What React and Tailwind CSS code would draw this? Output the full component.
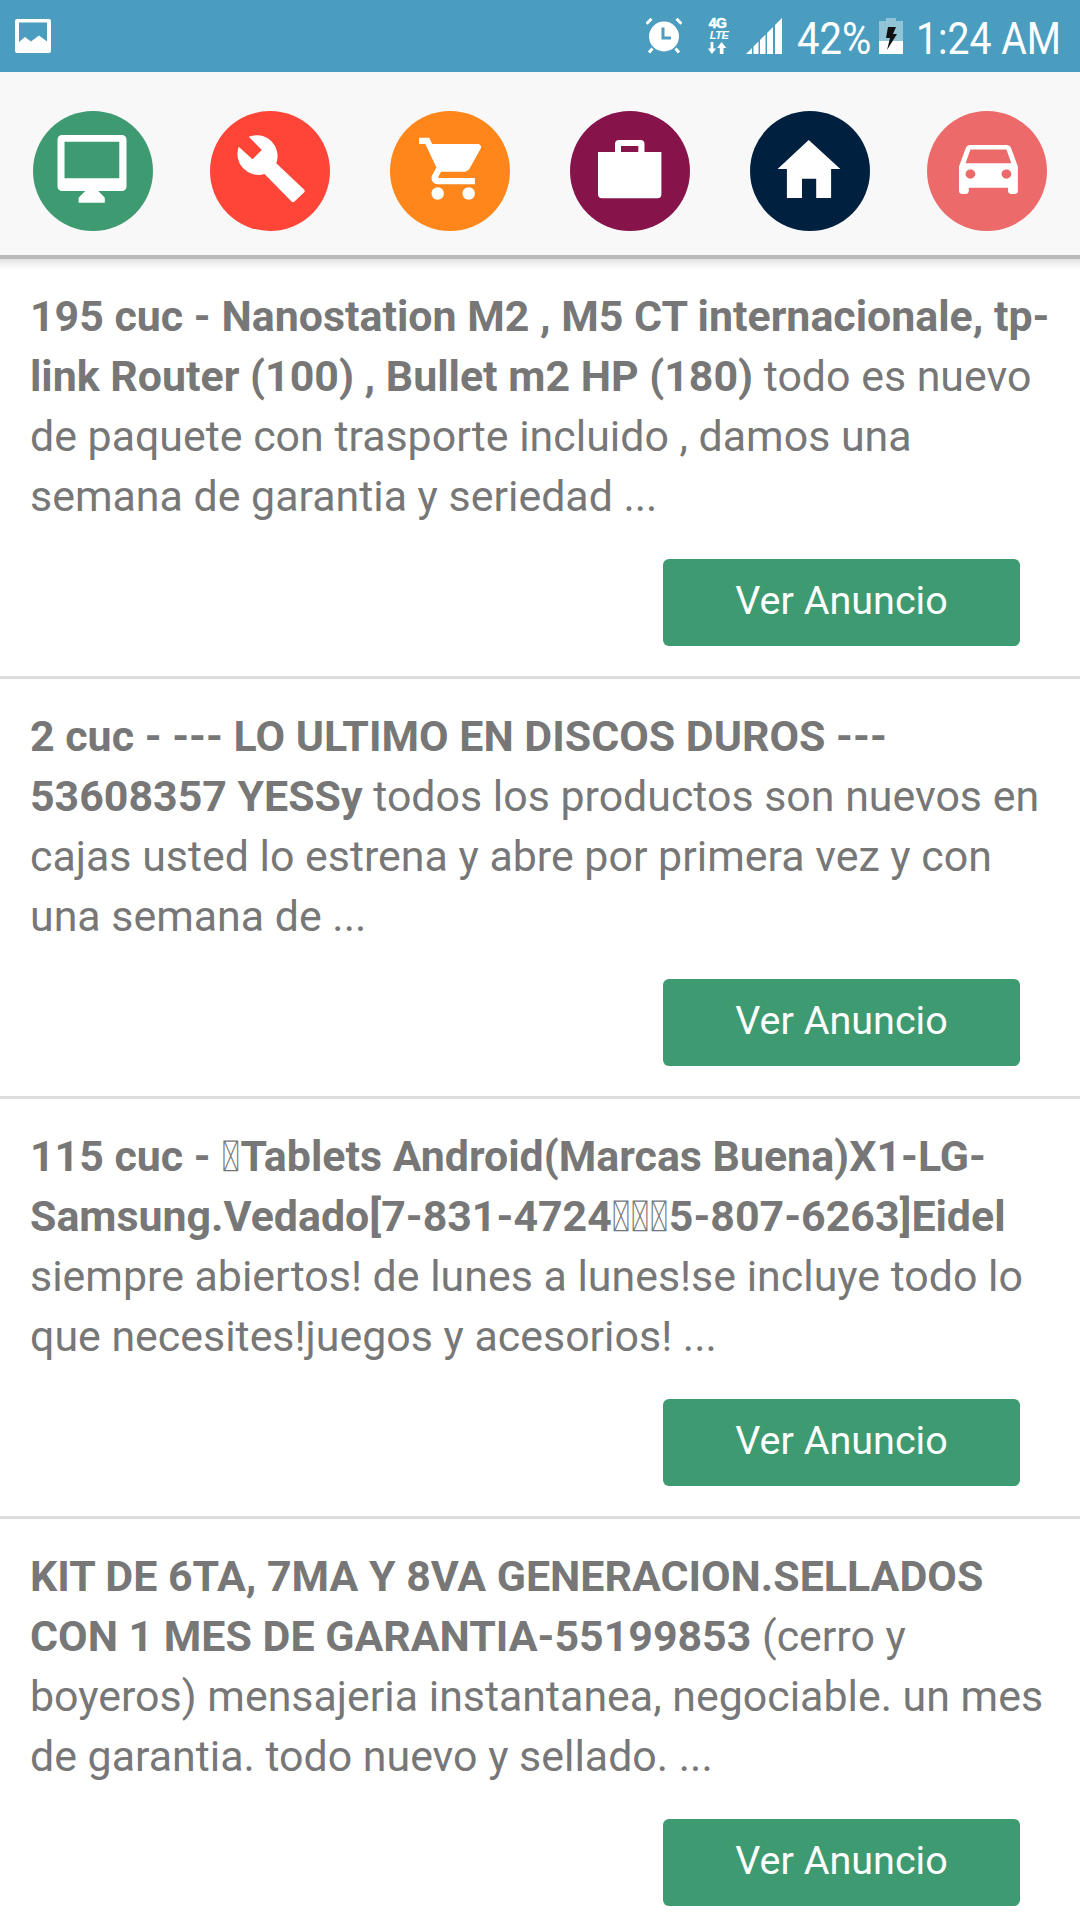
const PRE = 'font-[Roboto,sans-serif]';

const DesktopIcon = () => (
  <svg viewBox="0 0 120 120" className="w-[120px] h-[120px]">
    <path
      fill="#fff"
      fillRule="evenodd"
      d="M29 24h60a4.500 4.500 0 0 1 4.500 4.500v47a4.500 4.500 0 0 1-4.500 4.500H65.300l6.500 6.700v5H45.600v-5l6.600-6.700H29a4.500 4.500 0 0 1-4.500-4.500v-47A4.500 4.500 0 0 1 29 24zM31.500 30.700v36.600h54.800V30.700z"
    />
  </svg>
);

const WrenchIcon = () => (
  <svg viewBox="0 0 120 120" className="w-[120px] h-[120px]">
    <path
      fill="#fff"
      d="M38.700 25.700L51.800 39l-9.300 9.300-13.800-12.600A21 21 0 0 0 54.500 63l27 27.500q1.500 1.500 3 0l9.500-9q1.500-1.500 0-3L66.300 52.300A21 21 0 0 0 38.700 25.700z"
    />
  </svg>
);

const CartIcon = () => (
  <svg viewBox="0 0 120 120" className="w-[120px] h-[120px]">
    <g transform="translate(26 20.500) scale(3.100)">
      <path
        fill="#fff"
        d="M7 18c-1.100 0-1.990.9-1.990 2S5.900 22 7 22s2-.9 2-2-.9-2-2-2zM1 2v2h2l3.600 7.590-1.350 2.450c-.16.28-.25.61-.25.96 0 1.100.9 2 2 2h12v-2H7.420c-.14 0-.25-.11-.25-.25l.03-.12.9-1.630h7.450c.75 0 1.410-.41 1.750-1.030l3.580-6.490c.08-.14.12-.31.12-.48 0-.55-.45-1-1-1H5.210l-.94-2H1zm16 16c-1.100 0-1.990.9-1.990 2s.89 2 1.990 2 2-.9 2-2-.9-2-2-2z"
      />
    </g>
  </svg>
);

const BriefcaseIcon = () => (
  <svg viewBox="0 0 120 120" className="w-[120px] h-[120px]">
    <path
      fill="#fff"
      fillRule="evenodd"
      d="M49 29h21.500a4 4 0 0 1 4 4v8H91.400v42.300a4 4 0 0 1-4 4H32a4 4 0 0 1-4-4V41h17v-8a4 4 0 0 1 4-4zM51 35v6h17.300v-6z"
    />
  </svg>
);

const HomeIcon = () => (
  <svg viewBox="0 0 120 120" className="w-[120px] h-[120px]">
    <path
      fill="#fff"
      d="M58.700 29L90.400 58H81.100V87H66.200V67.700H52V87H36.900V58H27.600z"
    />
  </svg>
);

const CarIcon = () => (
  <svg viewBox="0 0 120 120" className="w-[120px] h-[120px]">
    <g transform="matrix(3.270 0 0 3.060 22.200 18.700)">
      <path
        fill="#fff"
        d="M18.920 6.010C18.720 5.420 18.160 5 17.500 5h-11c-.66 0-1.210.42-1.420 1.010L3 12v8c0 .55.45 1 1 1h1c.55 0 1-.45 1-1v-1h12v1c0 .55.45 1 1 1h1c.55 0 1-.45 1-1v-8l-2.080-5.990zM6.500 16c-.83 0-1.500-.67-1.500-1.500S5.670 13 6.500 13s1.500.67 1.500 1.500S7.330 16 6.500 16zm11 0c-.83 0-1.500-.67-1.500-1.500s.67-1.500 1.500-1.500 1.500.67 1.500 1.500-.67 1.500-1.500 1.500zM5 11l1.500-4.500h11L19 11H5z"
      />
    </g>
  </svg>
);

const categories = [
  { icon: <DesktopIcon />, bg: 'bg-[#3e9a71]', gap: 'ml-[33px]' },
  { icon: <WrenchIcon />, bg: 'bg-[#ff4438]', gap: 'ml-[57px]' },
  { icon: <CartIcon />, bg: 'bg-[#ff861b]', gap: 'ml-[60px]' },
  { icon: <BriefcaseIcon />, bg: 'bg-[#861349]', gap: 'ml-[60px]' },
  { icon: <HomeIcon />, bg: 'bg-[#00203f]', gap: 'ml-[60px]' },
  { icon: <CarIcon />, bg: 'bg-[#ec6a6a]', gap: 'ml-[57px]' },
];

const ads = [
  {
    title: '195 cuc - Nanostation M2 , M5 CT internacionale, tp-link Router (100) , Bullet m2 HP (180)',
    body: ' todo es nuevo de paquete con trasporte incluido , damos una semana de garantia y seriedad ...',
  },
  {
    title: '2 cuc - --- LO ULTIMO EN DISCOS DUROS --- 53608357 YESSy',
    body: ' todos los productos son nuevos en cajas usted lo estrena y abre por primera vez y con una semana de ...',
  },
  {
    title: '115 cuc - \uE000Tablets Android(Marcas Buena)X1-LG-Samsung.Vedado[7-831-4724\uE000\uE000\uE0005-807-6263]Eidel',
    body: ' siempre abiertos! de lunes a lunes!se incluye todo lo que necesites!juegos y acesorios! ...',
  },
  {
    title: 'KIT DE 6TA, 7MA Y 8VA GENERACION.SELLADOS CON 1 MES DE GARANTIA-55199853',
    body: ' (cerro y boyeros) mensajeria instantanea, negociable. un mes de garantia. todo nuevo y sellado. ...',
  },
];

const StatusBar = () => (
  <div className="h-[72px] bg-[#4a9dbf] flex items-center text-white relative shrink-0">
    {/* picture notification */}
    <svg viewBox="0 0 36 34" className="w-[36px] h-[34px] ml-[15px]">
      <path
        fill="#fff"
        fillRule="evenodd"
        d="M2 0h32a2 2 0 0 1 2 2v30a2 2 0 0 1-2 2H2a2 2 0 0 1-2-2V2a2 2 0 0 1 2-2zM4 3.500v19.500l6-5 6 4.500 8-6 8 6V3.500z"
      />
    </svg>

    <div className="ml-auto flex items-center h-full">
      {/* alarm */}
      <svg viewBox="0 0 36 36" className="w-[36px] h-[36px] mr-[25px]">
        <circle cx="18" cy="18.500" r="15" fill="#fff" />
        <path d="M5.500 0.800L0.500 5.800M30.500 0.800l5 5M6.500 30.500l-3.500 4M29.500 30.500l3.500 4" stroke="#fff" strokeWidth="3" fill="none" />
        <path d="M17 9.500v10.500h8" stroke="#4a9dbf" strokeWidth="3" fill="none" />
      </svg>

      {/* 4G LTE with arrows */}
      <div className="w-[21px] h-[36px] mr-[18px] flex flex-col items-center font-['Liberation_Sans',sans-serif] font-bold">
        <span className="text-[14px] leading-[11px] tracking-[-0.5px] [-webkit-text-stroke:0.5px_#fff]">4G</span>
        <span className="text-[11px] leading-[11px] italic tracking-[-0.5px] mt-[1px] ml-[3px]">LTE</span>
        <svg viewBox="0 0 22 13" className="w-[21px] h-[12px] mt-[1px]">
          <path fill="#fff" d="M3.500 0h3v7h3l-4.500 6-4.500-6h3zM15.500 0l5 6.500h-3V13h-4V6.500h-3z" />
        </svg>
      </div>

      {/* signal */}
      <svg viewBox="0 0 36 36" className="w-[36px] h-[36px] mr-[15px]">
        <path fill="#fff" d="M0 36l6-6v6zM7.500 28.500l5-5V36h-5zM14 22l5.500-5.500V36H14zM21 15l6-6v27h-6zM29 7l7-7v36h-7z" />
      </svg>

      <span className={`${PRE} inline-block text-[45px] leading-[72px] pt-[5px] w-[71px] whitespace-nowrap origin-left scale-x-[.89]`}>42%</span>

      {/* battery charging */}
      <svg viewBox="0 0 24 36" className="w-[24px] h-[36px] ml-[11px] mr-[13px]">
        <path fill="#ffffff" fillOpacity=".4" d="M7 0h10v3h7v20H0V3h7z" />
        <path fill="#fff" d="M0 23h24v13H0z" />
        <path fill="#111" d="M9 9h8l-3 7h4L8 32l3-12H7z" />
      </svg>

      <span className={`${PRE} inline-block text-[45px] leading-[72px] pt-[5px] w-[144px] mr-[20px] whitespace-nowrap origin-left scale-x-[.87]`}>1:24 AM</span>
    </div>
  </div>
);

export default function App() {
  return (
    <div className={`w-[1080px] h-[1920px] overflow-hidden bg-white flex flex-col ${PRE}`}>
      <StatusBar />

      <div className="h-[187px] bg-[#f8f8f8] border-b-[4px] border-[#bababa] pt-[39px] flex items-start relative shrink-0">
        {categories.map((c, i) => (
          <div key={i} className={`w-[120px] h-[120px] rounded-full shrink-0 ${c.bg} ${c.gap}`}>
            {c.icon}
          </div>
        ))}
        {/* fade under the toolbar */}
        <div className="absolute left-0 right-0 top-full mt-[4px] h-[11px] bg-gradient-to-b from-[#e4e4e4] to-white" />
      </div>

      {ads.map((ad, i) => (
        <div key={i} className="h-[420px] shrink-0 border-b-[3px] border-[#dddddd] pt-[27px] pl-[30px] pr-[24px]">
          <p className="text-[42.9px] leading-[60px] text-[#777777] h-[240px]">
            <b className="font-bold">{ad.title}</b>
            {ad.body}
          </p>
          <div className="flex justify-end mt-[33px] pr-[36px]">
            <div className="w-[357px] h-[87px] pb-[4px] rounded-[6px] bg-[#3e9a71] text-white text-[39.500px] flex items-center justify-center">
              Ver Anuncio
            </div>
          </div>
        </div>
      ))}
    </div>
  );
}
